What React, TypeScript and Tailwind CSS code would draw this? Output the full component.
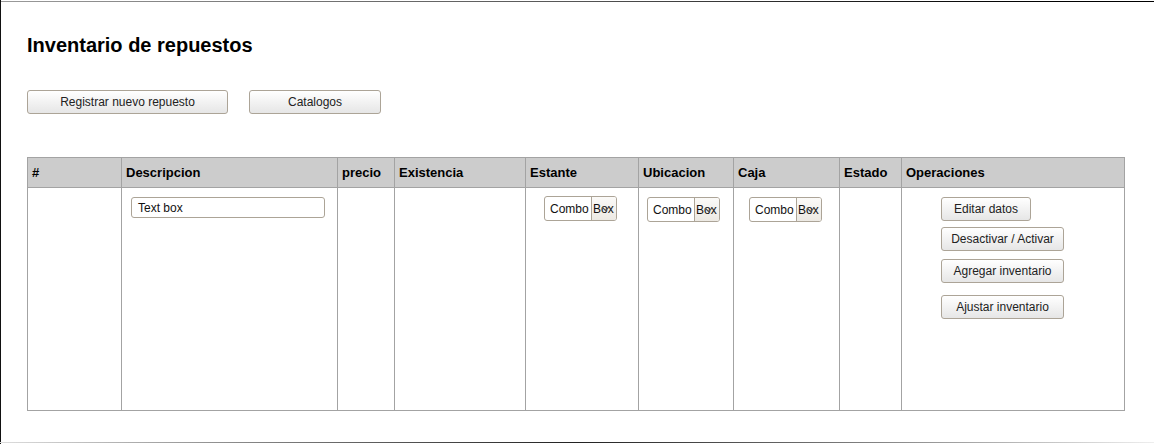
import React from 'react';

const cols = [
  { label: '#', w: 'w-[94px]' },
  { label: 'Descripcion', w: 'w-[216px]' },
  { label: 'precio', w: 'w-[57px]' },
  { label: 'Existencia', w: 'w-[131px]' },
  { label: 'Estante', w: 'w-[113px]' },
  { label: 'Ubicacion', w: 'w-[95px]' },
  { label: 'Caja', w: 'w-[106px]' },
  { label: 'Estado', w: 'w-[62px]' },
  { label: 'Operaciones', w: 'w-[222px]' },
];

const Btn: React.FC<{ label: string; className?: string }> = ({ label, className = '' }) => (
  <button
    type="button"
    className={`h-[24px] rounded-[3px] border border-[#aca497] bg-gradient-to-b from-white to-[#e6e6e6] text-[12px] text-[#222] leading-none ${className}`}
  >
    {label}
  </button>
);

const ComboBox: React.FC = () => (
  <div className="flex h-[25px] w-[73px] overflow-hidden rounded-[3px] border border-[#aca497] bg-white text-[12px] text-[#111]">
    <span className="flex w-[46px] items-center pl-[5px]">Combo</span>
    <span className="relative flex flex-1 items-center border-l border-[#aca497] bg-gradient-to-b from-[#fbfaf8] to-[#ece9e3] pl-[1px]">
      Box
      <svg className="absolute left-[9px] top-[9px]" width="9" height="6" viewBox="0 0 9 6">
        <polyline points="1,1 4.5,4.5 8,1" fill="none" stroke="#555" strokeWidth="1.2" />
      </svg>
    </span>
  </div>
);

const App: React.FC = () => {
  return (
    <div className="relative h-[444px] w-[1154px] overflow-hidden bg-white font-['Liberation_Sans',Arial,sans-serif]">
      {/* frame lines */}
      <div className="absolute left-0 top-[1px] h-[1px] w-full bg-gradient-to-r from-[#9a9a9a] via-[#555] to-[#000]" />
      <div className="absolute left-0 top-0 h-full w-[1px] bg-[#111]" />
      <div className="absolute bottom-[1px] left-0 h-[1px] w-full bg-gradient-to-r from-[#ddd] via-[#222] to-[#eee]" />

      <div className="px-[27px] pt-[34px]">
        <h1 className="text-[20px] font-bold leading-[23px] text-black">Inventario de repuestos</h1>

        <div className="mt-[33px] flex gap-[21px]">
          <Btn label="Registrar nuevo repuesto" className="w-[201px]" />
          <Btn label="Catalogos" className="w-[132px]" />
        </div>

        {/* table */}
        <div className="mt-[43px] flex w-[1098px] flex-col border border-[#a3a3a3]">
          <div className="flex h-[29px] bg-[#cccccc]">
            {cols.map((c, i) => (
              <div
                key={c.label}
                className={`${c.w} flex items-center pl-[4px] text-[13px] font-bold text-black ${i < cols.length - 1 ? 'border-r border-[#a3a3a3]' : ''}`}
              >
                {c.label}
              </div>
            ))}
          </div>
          <div className="flex h-[223px] border-t border-[#a3a3a3]">
            <div className="w-[94px] border-r border-[#a3a3a3]" />
            <div className="w-[216px] border-r border-[#a3a3a3] pl-[9px] pt-[9px]">
              <div className="flex h-[21px] w-[194px] items-center rounded-[3px] border border-[#aca497] pl-[6px] text-[12px] text-[#111]">
                Text box
              </div>
            </div>
            <div className="w-[57px] border-r border-[#a3a3a3]" />
            <div className="w-[131px] border-r border-[#a3a3a3]" />
            <div className="flex w-[113px] justify-start border-r border-[#a3a3a3] pl-[18px] pt-[8px]">
              <ComboBox />
            </div>
            <div className="flex w-[95px] justify-start border-r border-[#a3a3a3] pl-[8px] pt-[9px]">
              <ComboBox />
            </div>
            <div className="flex w-[106px] justify-start border-r border-[#a3a3a3] pl-[15px] pt-[9px]">
              <ComboBox />
            </div>
            <div className="w-[62px] border-r border-[#a3a3a3]" />
            <div className="flex w-[222px] flex-col items-start pl-[39px] pt-[9px]">
              <Btn label="Editar datos" className="w-[90px]" />
              <Btn label="Desactivar / Activar" className="mt-[6px] w-[123px]" />
              <Btn label="Agregar inventario" className="mt-[8px] w-[123px]" />
              <Btn label="Ajustar inventario" className="mt-[12px] w-[123px]" />
            </div>
          </div>
        </div>
      </div>
    </div>
  );
};

export default App;
